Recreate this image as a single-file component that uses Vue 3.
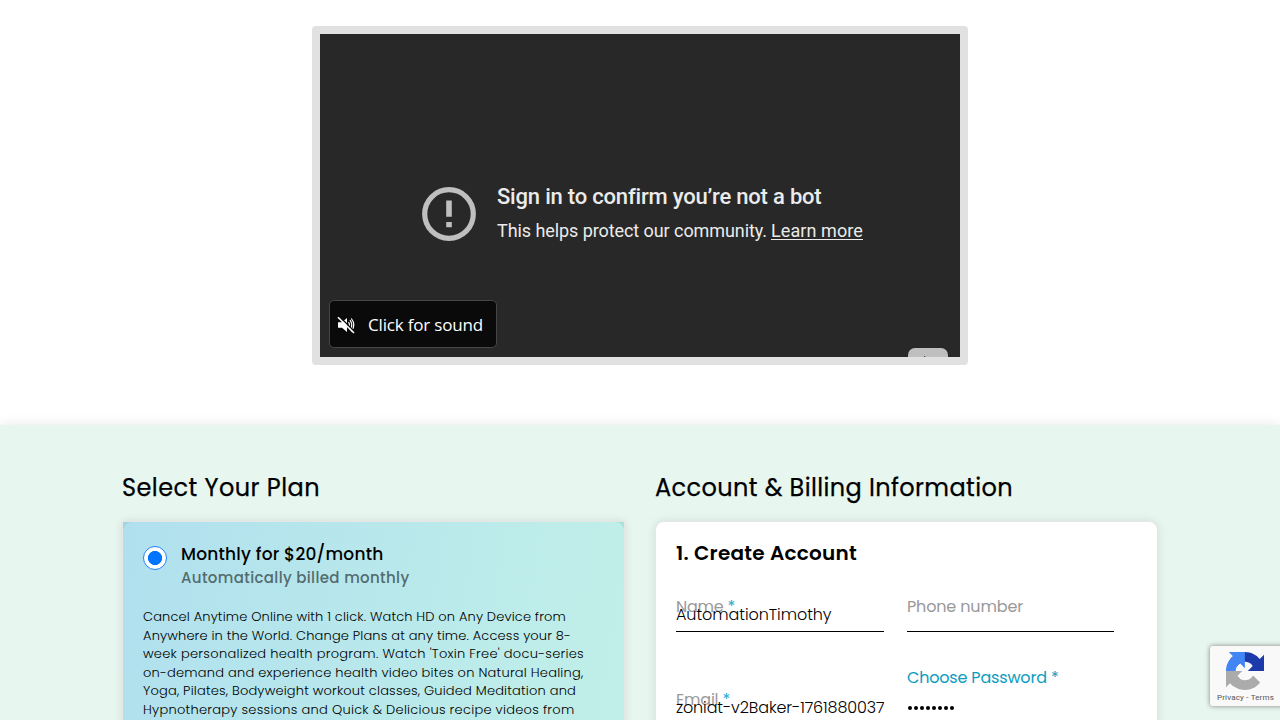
<script setup>
// Stretches or tightens the tracking so that a line fills its measure.
const vFit = {
  mounted(el, { value }) {
    const natural = el.getBoundingClientRect().width
    el.style.letterSpacing = `${(value - natural) / el.textContent.length}px`
  },
}

const lines = [
  ['Cancel Anytime Online with 1 click. Watch HD on Any Device from', 423],
  ['Anywhere in the World. Change Plans at any time. Access your 8-', 428],
  ["week personalized health program. Watch 'Toxin Free' docu-series", 441],
  ['on-demand and experience health video bites on Natural Healing,', 440.5],
  ['Yoga, Pilates, Bodyweight workout classes, Guided Meditation and', 433],
  ['Hypnotherapy sessions and Quick & Delicious recipe videos from', 431.5],
]
</script>

<template>
  <div class="page">
    <section class="hero">
      <div class="player">
        <svg class="alert" viewBox="0 0 54 54"><circle cx="27" cy="27" r="24.3" fill="none" stroke="#bfbfbf" stroke-width="5.2" /><path d="M24.2 13.5h5.6v16.2h-5.6zM24.2 35h5.6v5.3h-5.6z" fill="#bfbfbf" /></svg>
        <div class="message">
          <div class="title"><span v-fit="324">Sign in to confirm you’re not a bot</span></div>
          <div class="sub"><span v-fit="270">This helps protect our community.</span><u v-fit="92">Learn more</u></div>
        </div>
        <div class="sound">
          <svg class="mute" viewBox="0 0 18 18"><path d="M1 6.2h4L10 2v14l-5-4.2H1z" fill="#fff" /><path d="M11.5 6.2q2 2.8 0 5.6M13 4.2q3.6 4.8 0 9.6M14.3 2.5q5 6.5 0 13" fill="none" stroke="#fff" stroke-width="1.2" /><path d="M2 .3 18 16" stroke="#0a0a0a" stroke-width="1.5" /><path d="M1 1.2 17 17" stroke="#fff" stroke-width="1.6" /></svg>
          <span v-fit="115">Click for sound</span>
        </div>
        <div class="tube"><svg viewBox="0 0 40 28"><path d="M16 8v12l10.500-6z" fill="#282828" /></svg></div>
      </div>
    </section>
    <section class="signup">
      <div class="column">
        <h2><span v-fit="198">Select Your Plan</span></h2>
        <div class="plan">
          <div class="plan-inner">
            <div class="choice">
              <div class="radio"></div>
              <div>
                <div class="name"><span v-fit="202.500">Monthly for $20/month</span></div>
                <div class="billing"><span v-fit="228.500">Automatically billed monthly</span></div>
              </div>
            </div>
            <div class="copy">
              <div v-for="[text, width] in lines" :key="text"><span v-fit="width">{{ text }}</span></div>
            </div>
          </div>
        </div>
      </div>
      <div class="column">
        <h2><span v-fit="358">Account &amp; Billing Information</span></h2>
        <div class="account">
          <h3><span v-fit="181">1. Create Account</span></h3>
          <div class="fields">
            <div class="field">
              <label><span v-fit="59">Name <b>*</b></span></label>
              <div class="value"><span v-fit="155.500">AutomationTimothy</span></div>
            </div>
            <div class="field">
              <label><span v-fit="116">Phone number</span></label>
            </div>
            <div class="field">
              <label><span v-fit="54">Email <b>*</b></span></label>
              <div class="value"><span v-fit="208.500">zoniat-v2Baker-1761880037</span></div>
            </div>
            <div class="field">
              <label class="raised"><span v-fit="151.500">Choose Password *</span></label>
              <div class="dots"><i v-for="n in 8" :key="n"></i></div>
            </div>
          </div>
        </div>
      </div>
    </section>
    <aside class="captcha">
      <svg viewBox="0 0 64 64"><path d="M64 31.955l-.033-1.37V4.687l-7.16 7.16C50.948 4.674 42.033.093 32.05.093c-10.4 0-19.622 4.96-25.458 12.64l11.736 11.86a15.55 15.55 0 0 1 4.754-5.334c2.05-1.6 4.952-2.906 8.968-2.906.485 0 .86.057 1.135.163 4.976.393 9.288 3.14 11.828 7.124l-8.307 8.307L64 31.953" fill="#1c3aa9" /><path d="M31.862.094l-1.37.033H4.594l7.16 7.16C4.58 13.147 0 22.06 0 32.046c0 10.4 4.96 19.622 12.64 25.458L24.5 45.768a15.55 15.55 0 0 1-5.334-4.754c-1.6-2.05-2.906-4.952-2.906-8.968 0-.485.057-.86.163-1.135.393-4.976 3.14-9.288 7.124-11.828l8.307 8.307L31.86.095" fill="#4285f4" /><path d="M.001 32.045l.033 1.37v25.898l7.16-7.16c5.86 7.173 14.774 11.754 24.76 11.754 10.4 0 19.622-4.96 25.458-12.64l-11.736-11.86a15.55 15.55 0 0 1-4.754 5.334c-2.05 1.6-4.952 2.906-8.968 2.906-.485 0-.86-.057-1.135-.163-4.976-.393-9.288-3.14-11.828-7.124l8.307-8.307-31.297.033" fill="#ababab" /></svg>
      <div><span v-fit="57">Privacy - Terms</span></div>
    </aside>
  </div>
</template>

<style>
html, body { margin: 0; overflow: hidden; }
</style>

<style scoped>
* { box-sizing: border-box; }
.page { position: relative; width: 1280px; height: 720px; overflow: hidden; background: #fff; color: #000; font-family: Poppins, Inter, "Noto Sans", sans-serif; }
span { white-space: nowrap; }
.hero { height: 425px; padding-top: 26px; }
.player { position: relative; width: 656px; height: 339px; margin: 0 auto; border: 8px solid #e1e1e1; border-radius: 4px; background: #282828; overflow: hidden; display: flex; align-items: flex-start; padding: 147px 0 0 102px; color: #ebebeb; font-family: Roboto, sans-serif; }
.alert { width: 54px; height: 54px; margin-top: 6px; flex: none; }
.message { margin-left: 21px; }
.title { font-size: 22px; line-height: 30px; font-weight: 500; padding-top: 1px; }
.sub { display: flex; gap: 4px; font-size: 18px; line-height: 24px; margin-top: 7px; }
.sub u { white-space: nowrap; text-underline-offset: 2px; text-decoration-thickness: 1px; }
.sound { position: absolute; left: 9px; top: 266px; width: 168px; height: 48px; border: 1px solid #464646; border-radius: 5px; background: #0a0a0a; color: #fff; display: flex; align-items: center; padding-left: 7px; font: 17px/24px "Open Sans", sans-serif; }
.mute { width: 18px; height: 18px; margin: 2px 13px 0 0; }
.sound span { position: relative; top: 1px; }
.tube { position: absolute; left: 588px; top: 314px; width: 40px; height: 28px; border-radius: 7px; background: #bfbfbf; }
.tube svg { display: block; }
.signup { height: 400px; background: #e7f6ef; box-shadow: 0 0 12px rgba(0, 0, 0, .1); display: grid; grid-template-columns: 503px 503px; column-gap: 30px; padding: 44px 0 0 122px; }
h2 { margin: 0; height: 52px; font-size: 24px; line-height: 37px; font-weight: 400; -webkit-text-stroke: .25px; }
.plan, .account { height: 400px; border: 1px solid #e6e6e6; border-radius: 9px; box-shadow: 0 0 10px rgba(0, 0, 0, .1); }
.plan { border-radius: 2px; background: linear-gradient(90deg, #a1d4dc, #aae1da); }
.plan-inner { height: 100%; border-radius: 9px; background: linear-gradient(100deg, #b0e0ee, #c0efe9 90%); padding: 20px; }
.choice { display: flex; gap: 14px; height: 65px; }
.radio { width: 24px; height: 24px; margin-top: 4px; border: 1px solid #2380ff; border-radius: 50%; background: radial-gradient(circle, #0075ff 6.8px, #fff 7.3px); flex: none; }
.name { font-size: 17px; line-height: 24px; font-weight: 500; }
.billing { font-size: 15px; line-height: 23px; font-weight: 500; color: #536b6e; }
.copy { font-size: 13px; line-height: 18.57px; font-weight: 300; color: #000; padding-top: 1px; }
.account { background: #fff; padding: 17px 20px; }
h3 { margin: 0; font-size: 20px; line-height: 28px; font-weight: 600; }
.fields { display: grid; grid-template-columns: 208px 207px; column-gap: 23px; row-gap: 57px; margin-top: 29px; }
.field { position: relative; height: 36px; border-bottom: 1px solid #000; font-size: 16px; line-height: 24px; }
label { position: absolute; left: 0; top: -1px; color: #999; font-weight: 400; }
label b { font-weight: 400; color: #1ba7cd; }
.raised { top: -23px; color: #0a9dc0; }
.value { position: absolute; left: 0; top: 7px; width: 100%; overflow: hidden; font-weight: 300; }
.dots { position: absolute; left: 1px; top: 17px; display: flex; gap: 2px; }
.dots i { width: 4px; height: 4px; border-radius: 50%; background: #000; }
.captcha { position: absolute; left: 1210px; top: 646px; width: 80px; height: 60px; border-radius: 3px; background: #f9f9f9; box-shadow: 0 0 5px #808080; padding: 6px 0 0 7px; font: 8px/12px Roboto, sans-serif; color: #555; }
.captcha svg { display: block; width: 38px; height: 38px; margin-left: 9px; }
.captcha div { margin-top: 2px; }
</style>
